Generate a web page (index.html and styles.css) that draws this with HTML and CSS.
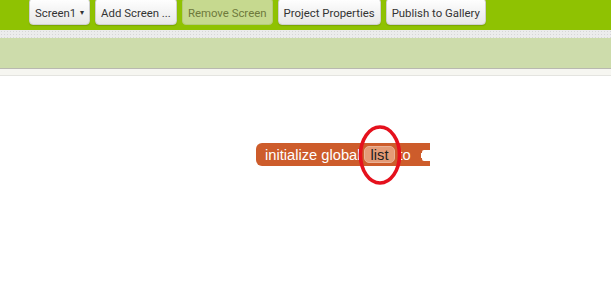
FILE: index.html
```html
<!DOCTYPE html>
<html lang="en">
<head>
  <meta charset="UTF-8">
  <meta name="viewport" content="width=device-width, initial-scale=1.0">
  <title>Blocks Editor</title>
  <link rel="stylesheet" href="styles.css">
</head>
<body>
  <!-- Toolbar with screen buttons -->
  <div class="toolbar">
    <button class="tb-btn">Screen1 <span class="caret">&#9662;</span></button>
    <button class="tb-btn">Add Screen ...</button>
    <button class="tb-btn" disabled>Remove Screen</button>
    <button class="tb-btn">Project Properties</button>
    <button class="tb-btn">Publish to Gallery</button>
  </div>
  <div class="dots"></div>
  <div class="band"></div>
  <div class="subbar"></div>

  <!-- Workspace -->
  <div class="workspace">
    <div class="block">
      <span class="label">initialize global</span>
      <span class="field">list</span>
      <span class="label">to</span>
      <svg class="socket" width="9" height="11" viewBox="0 0 9 11">
        <path d="M9 0 H3 Q1 0 1 2 V3 H0 V8 H1 V9 Q1 11 3 11 H9 Z" fill="#ffffff"/>
      </svg>
    </div>
    <svg class="ring" width="50" height="64" viewBox="0 0 50 64">
      <ellipse cx="25" cy="31" rx="19.5" ry="28" fill="none" stroke="#e5111d" stroke-width="3.6"/>
    </svg>
  </div>
</body>
</html>
```
FILE: styles.css
```css
body {
  margin: 0;
  font-family: Roboto, "Liberation Sans", Arial, sans-serif;
  background: #ffffff;
  width: 611px;
  height: 293px;
  overflow: hidden;
}
.toolbar {
  display: flex;
  align-items: flex-start;
  gap: 5px;
  height: 30px;
  padding-left: 29px;
  background-color: #8fc202;
  box-sizing: border-box;
}
.tb-btn {
  height: 27px;
  margin-top: -2px;
  padding: 2px 5px 0;
  font-family: Roboto, "Liberation Sans", Arial, sans-serif;
  font-size: 11.4px;
  color: #333333;
  background: linear-gradient(#ffffff, #e8e8e8);
  border: 1px solid #cfcfcf;
  border-radius: 4px;
  box-shadow: 0 1px 1px rgba(0, 0, 0, 0.15);
  cursor: pointer;
}
.tb-btn:disabled {
  color: #6f7a3c;
  background: #c6d98f;
  border-color: #b5cb7a;
  box-shadow: none;
}
.caret {
  font-size: 8px;
  vertical-align: 2px;
  margin-left: 1px;
}
.dots {
  height: 8px;
  background-color: #ececec;
  background-image: radial-gradient(#d6d6d6 35%, transparent 40%);
  background-size: 3px 3px;
}
.band {
  height: 30px;
  background-color: #cddcab;
  border-bottom: 1px solid #b9b9b0;
}
.subbar {
  height: 6px;
  background-color: #f6f6f1;
  border-bottom: 1px solid #e4e4e0;
}
.workspace {
  position: relative;
  height: 217px;
  background: #ffffff;
}
.block {
  position: absolute;
  left: 256px;
  top: 67px;
  width: 174px;
  height: 23px;
  display: flex;
  align-items: center;
  gap: 3px;
  padding-left: 9px;
  box-sizing: border-box;
  background-color: #cd5c2b;
  border-radius: 6px 0 0 6px;
  font-family: "Liberation Sans", Arial, sans-serif;
  font-size: 14.7px;
  color: #ffffff;
}
.field {
  height: 17px;
  line-height: 17px;
  padding: 0 6px;
  margin-left: 0;
  color: #1e1e1e;
  background-color: #e59b77;
  border: 1px solid #eab196;
  border-radius: 5px;
  box-sizing: border-box;
}
.socket {
  position: absolute;
  right: 0;
  top: 7px;
}
.ring {
  position: absolute;
  left: 355px;
  top: 48px;
}
```
